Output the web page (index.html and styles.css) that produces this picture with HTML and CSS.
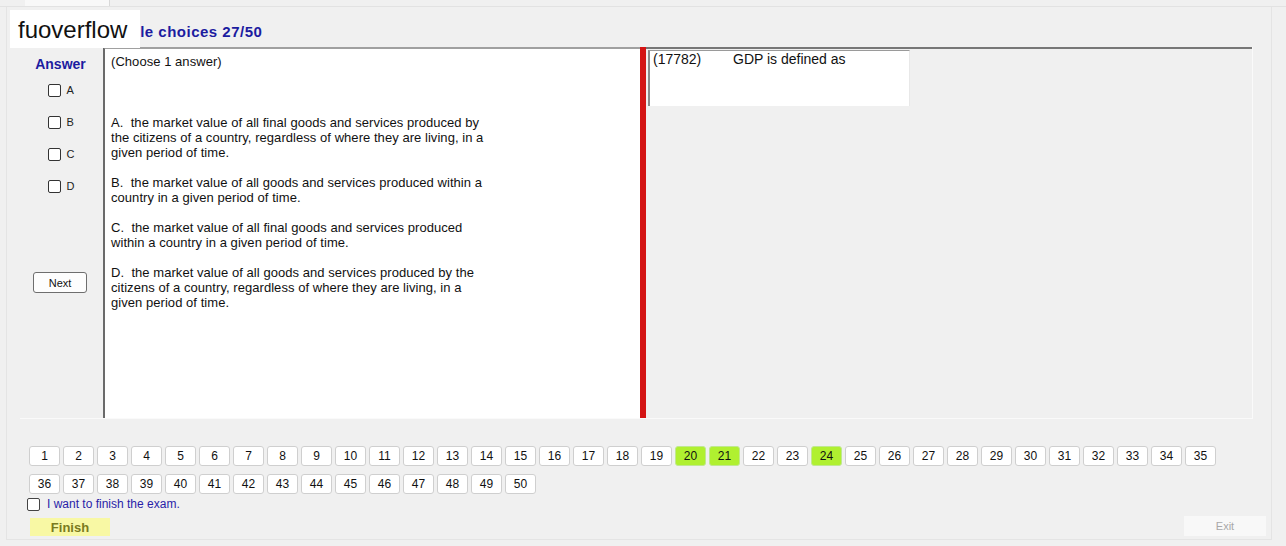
FILE: index.html
```html
<!DOCTYPE html>
<html lang="en">
<head>
    <meta charset="UTF-8">
    <title>Exam</title>
    <link rel="stylesheet" href="styles.css">
</head>
<body>

<div class="tabstrip">
    <div class="tab"></div>
</div>

<div class="app">
    <div class="watermark">fuoverflow</div>
    <div class="title">Multiple choices 27/50</div>

    <div class="main">
        <!-- answer checkboxes -->
        <div class="answers">
            <div class="answer-head">Answer</div>
            <label class="opt"><span class="box"></span>A</label>
            <label class="opt"><span class="box"></span>B</label>
            <label class="opt"><span class="box"></span>C</label>
            <label class="opt"><span class="box"></span>D</label>
            <button class="next-btn">Next</button>
        </div>

        <!-- question text -->
        <div class="question">
            <p class="q-note">(Choose 1 answer)</p>
            <p class="q-opt">A.&nbsp; the market value of all final goods and services produced by<br>the citizens of a country, regardless of where they are living, in a<br>given period of time.</p>
            <p class="q-opt">B.&nbsp; the market value of all goods and services produced within a<br>country in a given period of time.</p>
            <p class="q-opt">C.&nbsp; the market value of all final goods and services produced<br>within a country in a given period of time.</p>
            <p class="q-opt">D.&nbsp; the market value of all goods and services produced by the<br>citizens of a country, regardless of where they are living, in a<br>given period of time.</p>
        </div>

        <div class="splitter"></div>

        <div class="stem">
            <div class="stem-box"><span class="qid">(17782)</span>GDP is defined as</div>
        </div>
    </div>

    <div class="pager" id="pager"></div>

    <label class="finish-check"><span class="box"></span>I want to finish the exam.</label>

    <div class="footer">
        <button class="finish-btn">Finish</button>
        <button class="exit-btn">Exit</button>
    </div>
</div>

<script>
    // Build the question number buttons
    var pager = document.getElementById('pager');
    var answered = [20, 21, 24];
    for (var i = 1; i <= 50; i++) {
        var b = document.createElement('button');
        b.className = 'num-btn';
        if (answered.indexOf(i) !== -1) {
            b.className += ' done';
        }
        b.textContent = i;
        pager.appendChild(b);
    }
</script>

</body>
</html>
```

FILE: styles.css
```css
body {
    font-family: "Liberation Sans", Arial, sans-serif;
    background-color: #f0f0f0;
    margin: 0;
    padding: 0;
    width: 1286px;
    height: 546px;
    overflow: hidden;
    color: #000;
}
.tabstrip {
    height: 6px;
    border-bottom: 1px solid #e2e2e2;
    padding-left: 25px;
}
.tab {
    width: 84px;
    height: 6px;
    background-color: #f8f8f8;
    border-right: 1px solid #d8d8d8;
}
.app {
    position: relative;
    margin-left: 6px;
    width: 1264px;
    height: 532px;
    border-left: 1px solid #e4e4e4;
    border-right: 1px solid #e4e4e4;
    border-bottom: 1px solid #e4e4e4;
}
.watermark {
    position: absolute;
    left: 3px;
    top: 3px;
    width: 122px;
    height: 38px;
    padding-left: 8px;
    background-color: #fff;
    font-size: 24px;
    line-height: 40px;
    color: #111;
}
.title {
    padding: 16px 0 0 86px;
    height: 24px;
    font-size: 15px;
    font-weight: bold;
    letter-spacing: 0.5px;
    color: #1c1ca0;
}
.main {
    display: flex;
    margin-left: 13px;
    width: 1232px;
    height: 371px;
    border-bottom: 1px solid #fafafa;
    border-right: 1px solid #fafafa;
}
.answers {
    width: 83px;
    display: flex;
    flex-direction: column;
    align-items: center;
}
.answer-head {
    margin-top: 9px;
    font-size: 14px;
    font-weight: bold;
    color: #1c1ca0;
    height: 18px;
    margin-right: 2px;
}
.opt {
    display: flex;
    align-items: center;
    height: 32px;
    width: 30px;
    font-size: 11px;
    color: #222;
    margin-left: 2px;
}
.box {
    width: 11px;
    height: 11px;
    border: 1px solid #333;
    border-radius: 2px;
    background-color: #fff;
    margin-right: 6px;
    flex-shrink: 0;
}
.next-btn {
    margin-top: 70px;
    margin-right: 3px;
    width: 54px;
    height: 21px;
    padding: 0;
    font-family: "Liberation Sans", Arial, sans-serif;
    font-size: 11px;
    color: #111;
    background-color: #fdfdfd;
    border: 1px solid #6e6e6e;
    border-radius: 3px;
}
.question {
    width: 529px;
    background-color: #fff;
    border-left: 2px solid #6a6a6a;
    border-top: 2px solid #a0a0a0;
    padding: 5px 0 0 6px;
    font-size: 13px;
    line-height: 15px;
    letter-spacing: 0.05px;
    color: #111;
}
.question p {
    margin: 0;
    white-space: nowrap;
}
.q-note {
    height: 61px;
}
.q-opt {
    margin-bottom: 15px !important;
}
.splitter {
    width: 6px;
    background-color: #d41414;
}
.stem {
    flex: 1;
    border-top: 2px solid #777;
    padding-top: 1px;
}
.stem-box {
    width: 262px;
    height: 56px;
    margin-left: 2px;
    background-color: #fff;
    border-left: 2px solid #8a8a8a;
    border-top: 1px solid #9a9a9a;
    border-right: 1px solid #e8e8e8;
    padding: 0 0 0 3px;
    font-size: 14px;
    color: #111;
    box-sizing: border-box;
}
.qid {
    display: inline-block;
    width: 80px;
}
.pager {
    display: flex;
    flex-wrap: wrap;
    gap: 8px 3px;
    margin: 27px 0 0 22px;
    width: 1200px;
}
.num-btn {
    width: 31px;
    height: 20px;
    padding: 0;
    font-family: "Liberation Sans", Arial, sans-serif;
    font-size: 12px;
    color: #111;
    background-color: #fff;
    border: 1px solid #cfcfcf;
    border-radius: 3px;
}
.num-btn.done {
    background-color: #b0f030;
    border-color: #c0e890;
}
.finish-check {
    display: flex;
    align-items: center;
    margin: 3px 0 0 20px;
    font-size: 12px;
    color: #2a1ea8;
    height: 14px;
}
.finish-check .box {
    border-color: #444;
    margin-right: 7px;
}
.footer {
    display: flex;
    justify-content: space-between;
    align-items: flex-start;
    margin: 5px 0 0 23px;
    width: 1236px;
}
.finish-btn {
    margin-top: 2px;
    width: 80px;
    height: 18px;
    padding: 0;
    font-family: "Liberation Sans", Arial, sans-serif;
    font-size: 13px;
    font-weight: bold;
    color: #7a7a20;
    background-color: #f8f8a4;
    border: none;
}
.exit-btn {
    width: 82px;
    height: 20px;
    padding: 0;
    font-family: "Liberation Sans", Arial, sans-serif;
    font-size: 11px;
    color: #a8a8a8;
    background-color: #f8f8f8;
    border: none;
}
```
